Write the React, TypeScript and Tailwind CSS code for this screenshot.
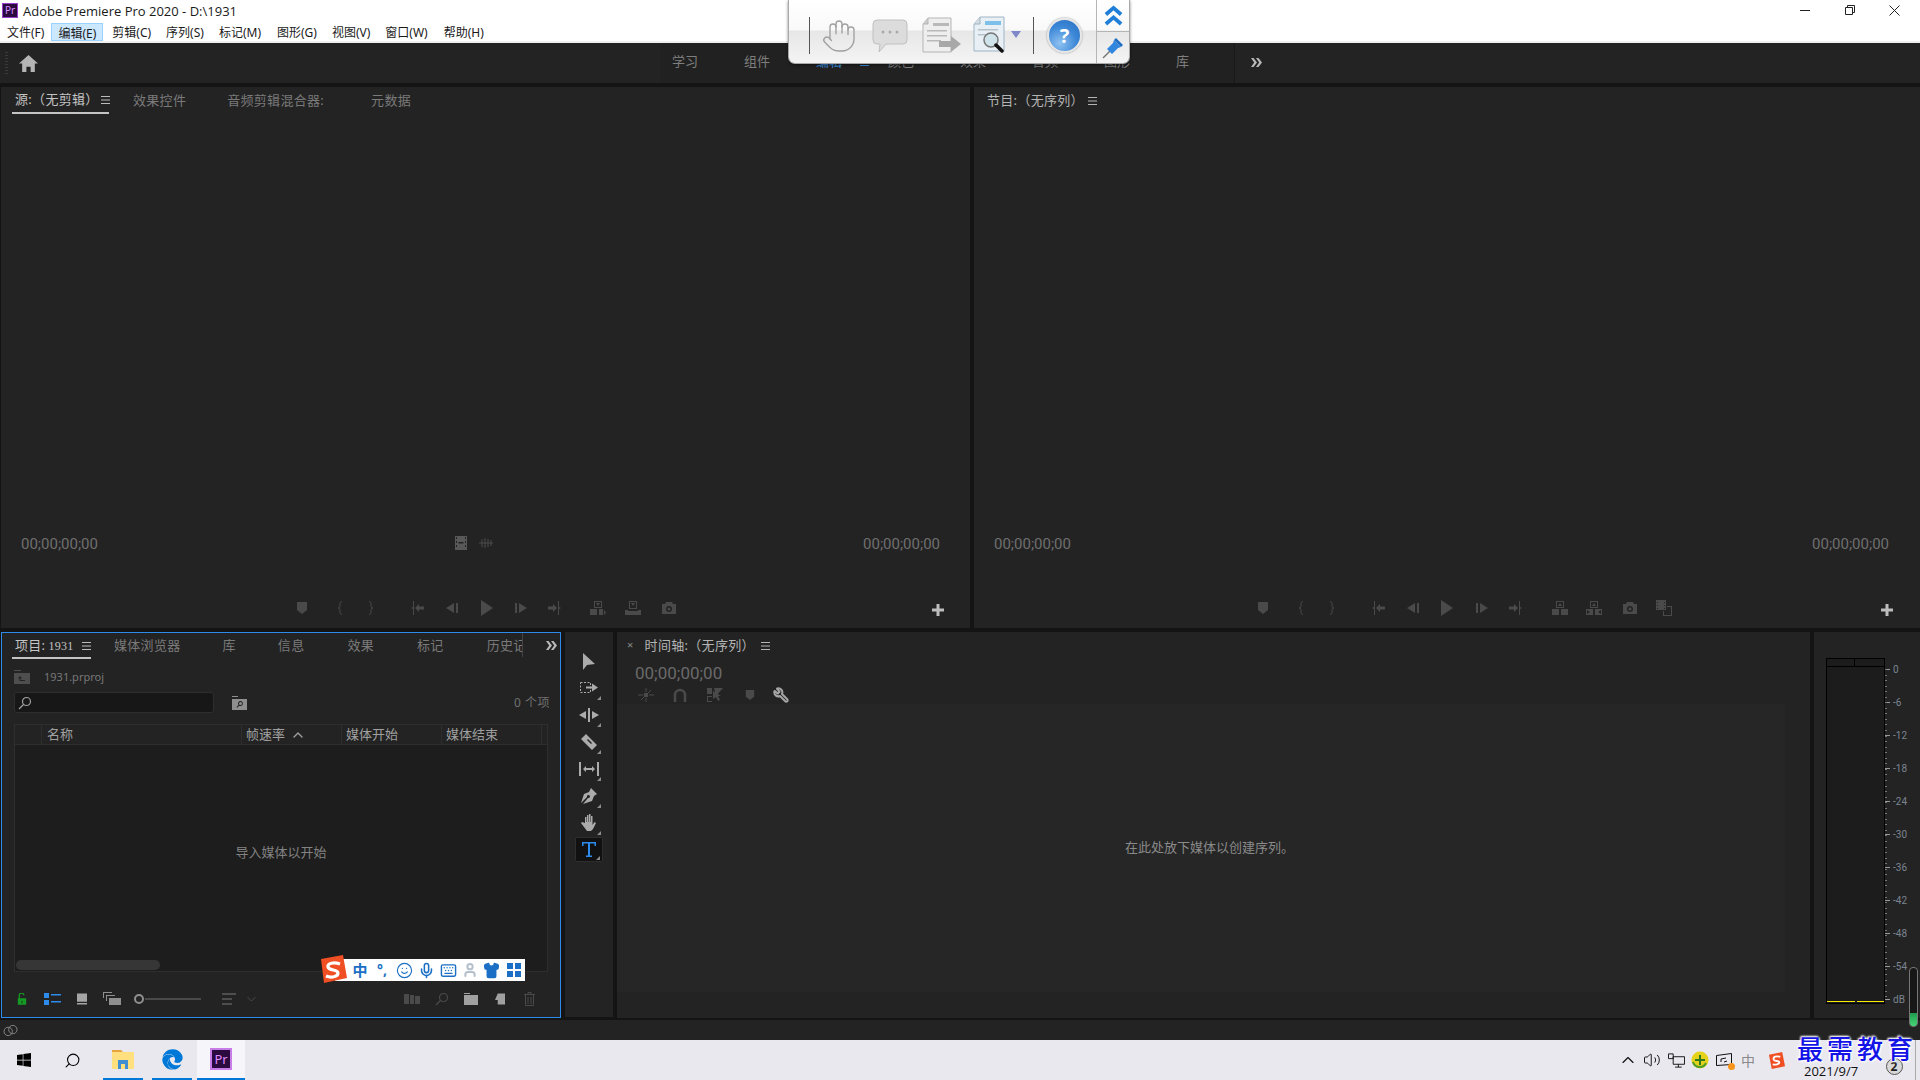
import React from "react";
import { Hand, Mic, Keyboard, User, Shirt, Smile, ChevronUp, Volume2, Search, Wrench } from "lucide-react";
import { FaWindows, FaEdge } from "react-icons/fa";

type P = { className?: string };
const Box = ({ className, children, vb = "0 0 16 16" }: P & { children: React.ReactNode; vb?: string }) => (
  <svg viewBox={vb} fill="currentColor" className={className}>{children}</svg>
);
const base = "w-4 h-4 shrink-0";
const Marker = () => <Box className={base}><path d="M3 2h10v8l-5 4-5-4z" /></Box>;
const BraceL = () => <Box className={base}><path d="M10 1.5C8 1.5 8 3 8 5s0 2.5-2 3c2 .5 2 1 2 3s0 3.5 2 3.5" fill="none" stroke="currentColor" /></Box>;
const BraceR = () => <Box className={base}><path d="M6 1.5C8 1.5 8 3 8 5s0 2.5 2 3c-2 .5-2 1-2 3s0 3.5-2 3.5" fill="none" stroke="currentColor" /></Box>;
const GoIn = () => <Box className={base}><path d="M4 1v6L2 8l2 1v6h1V1zM6 8l4-4v2.5h5v3h-5V12z" /></Box>;
const StepBack = () => <Box className={base}><path d="M11 3v10L3 8zM13 3h2v10h-2z" /></Box>;
const Play = () => <Box className={base}><path d="M2 0v16l12-8z" /></Box>;
const StepFwd = () => <Box className={base}><path d="M1 3h2v10H1zM5 3v10l8-5z" /></Box>;
const GoOut = () => <Box className={base}><path d="M1 6.5h5V4l4 4-4 4V9.5H1zM11 1h1v6l2 1-2 1v6h-1z" /></Box>;
const Insert = () => <Box className={base}><path fillRule="evenodd" d="M4 1h8v7H4zM5 2v5h6V2zM6 3h4L8 6zM0 9h7v6H0zM9 9h4v6H9zM14 10l2 2.5-2 2.5z" /></Box>;
const Overwrite = () => <Box className={base}><path fillRule="evenodd" d="M4 1h8v8H4zM5 2v6h6V2zM6 3h4L8 6zM0 10h3v1h10v-1h3v5H0z" /></Box>;
const Lift = () => <Box className={base}><path fillRule="evenodd" d="M4 1h8v7H4zM5 2v5h6V2zM8 3l2 3H6zM0 9h7v6H0zM9 9h7v6H9z" /></Box>;
const Extract = () => <Box className={base}><path fillRule="evenodd" d="M4 1h8v7H4zM5 2v5h6V2zM8 3l2 3H6zM0 9h7v6H0zM1 10v4l3-2zM9 9h7v6H9zM15 10v4l-3-2z" /></Box>;
const Camera = () => <Box className={base}><path fillRule="evenodd" d="M5 2h6l1 2h3v10H1V4h3zM8 6a3 3 0 1 0 0 6 3 3 0 0 0 0-6zm0 1.5a1.5 1.5 0 1 1 0 3 1.5 1.5 0 0 1 0-3z" /></Box>;
const Compare = () => <Box className={base}><path fillRule="evenodd" d="M0 0h10v10H0zM1 2v1h1V2zM1 5v1h1V5zM1 8v1h1V8zM8 2v1h1V2zM8 5v1h1V5zM8 8v1h1V8zM11 6h5v10H7v-5h1v4h7V7h-4z" /></Box>;
const Plus = () => <Box className="w-4 h-4 shrink-0 text-[#bdbdbd]"><path d="M6.5 2h3v4.5H14v3H9.5V14h-3V9.5H2v-3h4.5z" /></Box>;
const DoubleChevron = ({ className = "" }: P) => (
  <svg viewBox="0 0 11 9" fill="currentColor" className={`w-[11px] h-[9px] shrink-0 text-[#b8b8b8] ${className}`}>
    <path d="M0 0h2.5L6 4.5 2.5 9H0l3.2-4.5zM5 0h2.5L11 4.5 7.5 9H5l3.2-4.5z" />
  </svg>
);

const MenuGlyph = ({ className = "text-[#a8a8a8]" }: P) => (
  <svg viewBox="0 0 9 8" fill="currentColor" className={`w-[9px] h-2 shrink-0 ${className}`}>
    <path d="M0 0h9v1H0zM0 3.5h9v1H0zM0 7h9v1H0z" />
  </svg>
);
const Corner = () => <span className="absolute right-[2px] bottom-[1px] w-0 h-0 border-l-[4px] border-l-transparent border-b-[4px] border-b-[#8d8d8d]" />;

const Tool = ({ children, fly = true }: { children: React.ReactNode; fly?: boolean }) => (
  <div className="relative w-7 h-[27px] flex items-center justify-center text-[#ababab]">
    {children}
    {fly && <Corner />}
  </div>
);

const menus = [
  ["文件(F)", "ml-[7px]"], ["编辑(E)", "ml-[7px] bg-[#cce8ff] border border-[#99d1ff] px-[6px]"], ["剪辑(C)", "ml-[9px]"], ["序列(S)", "ml-[15px]"],
  ["标记(M)", "ml-[15px]"], ["图形(G)", "ml-[16px]"], ["视图(V)", "ml-[15px]"], ["窗口(W)", "ml-[15px]"], ["帮助(H)", "ml-[16px]"],
] as const;

const Timecode = ({ className = "" }: P) => <span className={`text-[15px] text-[#6f6f6f] [font-family:'Roboto',sans-serif] ${className}`}>00;00;00;00</span>;

const ScaleRow = ({ t }: { t: string }) => (
  <div className="flex items-center h-3">
    <span className="w-[5px] h-px bg-[#9a9a9a]" />
    <span className="ml-[3px] text-[10px] text-[#7c8591] [font-family:'Roboto',sans-serif]">{t}</span>
  </div>
);

export default function App() {
  return (
    <div className="relative w-[1920px] h-[1080px] overflow-hidden flex flex-col bg-[#141414] [text-spacing-trim:space-all] [font-family:'Noto_Sans','Noto_Sans_CJK_SC',sans-serif]">
      {/* Title + menu */}
      <div className="h-[43px] shrink-0 bg-white border-b-2 border-[#f0f0f0] flex flex-col">
        <div className="h-[22px] flex items-center">
          <div className="ml-[2px] -mt-[2px] w-4 h-[15px] bg-[#2a0a3f] border border-[#9a3fd0] flex items-center justify-center text-[10px] leading-none text-[#d78bff]">Pr</div>
          <span className="ml-[5px] mt-[1px] text-[13px] text-[#1a1a1a] [font-family:'Open_Sans',sans-serif]">Adobe Premiere Pro 2020 - D:\1931</span>
          <div className="ml-auto -mt-[2px] flex items-center text-[#222]">
            <span className="w-[45px] h-[21px] flex items-center justify-center"><span className="w-[10px] h-px bg-[#222]" /></span>
            <span className="w-[45px] h-[21px] flex items-center justify-center">
              <svg viewBox="0 0 10 10" className="w-[10px] h-[10px]" fill="none" stroke="currentColor"><path d="M.5 2.5h7v7h-7zM2.5 2.5v-2h7v7h-2" /></svg>
            </span>
            <span className="w-[45px] h-[21px] mr-[3px] flex items-center justify-center">
              <svg viewBox="0 0 11 11" className="w-[11px] h-[11px]" fill="none" stroke="currentColor"><path d="M.5.5l10 10M10.5.5l-10 10" /></svg>
            </span>
          </div>
        </div>
        <div className="h-[19px] flex items-center text-[12px] text-[#1a1a1a]">
          {menus.map(([t, c]) => <span key={t} className={`h-[18px] leading-[19px] ${c}`}>{t}</span>)}
        </div>
      </div>

      {/* Workspace header */}
      <div className="h-10 shrink-0 bg-[#232323] flex items-center">
        <div className="w-[660px] h-full flex items-center">
          <span className="ml-[5px] w-[3px] h-[22px] bg-[repeating-linear-gradient(to_bottom,#3a3a3a_0,#3a3a3a_1px,transparent_1px,transparent_3px)]" />
          <svg viewBox="0 0 18 18" fill="currentColor" className="ml-[11px] w-[19px] h-[19px] text-[#b5b5b5]"><path d="M9 1l9 8h-3v8h-4v-5H7v5H3V9H0z" /></svg>
        </div>
        <div className="w-[575px] h-full pl-3 pb-[2px] bg-[#212121] border-r border-[#191919] flex items-center text-[13px] text-[#7f7f7f]">
          <span className="w-[72px]">学习</span>
          <span className="w-[72px]">组件</span>
          <span className="w-[72px] flex items-center gap-[18px] text-[#3c8fe0]">编辑<MenuGlyph className="text-[#3c8fe0]" /></span>
          <span className="w-[72px]">颜色</span>
          <span className="w-[72px]">效果</span>
          <span className="w-[72px]">音频</span>
          <span className="w-[72px]">图形</span>
          <span>库</span>
        </div>
        <DoubleChevron className="ml-4 -mt-[2px]" />
      </div>
      <div className="h-1 shrink-0" />

      {/* Monitors */}
      <div className="h-[541px] shrink-0 flex gap-1">
        <div className="ml-px w-[969px] bg-[#232323] flex flex-col">
          <div className="h-[27px] flex items-start text-[13px] tracking-[0.3px] text-[#7a7a7a]">
            <div className="ml-[11px] w-[97px] h-[27px] pl-[3px] border-b-2 border-[#c4c4c4] flex items-center whitespace-nowrap text-[#c4c4c4]">源:（无剪辑）<MenuGlyph className="ml-[2px] text-[#bbb]" /></div>
            <span className="ml-6 h-[26px] leading-[26px]">效果控件</span>
            <span className="ml-[41px] h-[26px] leading-[26px]">音频剪辑混合器:</span>
            <span className="ml-[47px] h-[26px] leading-[26px]">元数据</span>
          </div>
          <div className="flex-1" />
          <div className="h-5 flex items-center pl-5 text-[#4c4c4c]">
            <Timecode />
            <svg viewBox="0 0 12 16" fill="currentColor" className="ml-[357px] -mt-[2px] w-3 h-4 text-[#585858]"><path fillRule="evenodd" d="M0 1h12v14H0zM1 2v2h1V2zM1 6v2h1V6zM1 10v2h1v-2zM10 2v2h1V2zM10 6v2h1V6zM10 10v2h1v-2zM3.5 7v1.5h5V7z" /></svg>
            <svg viewBox="0 0 14 10" fill="none" stroke="currentColor" className="ml-[12px] -mt-[2px] w-[14px] h-[10px]"><path d="M0 5h14M3 1v8M6 0v10M9 1v8M12 2v6" /></svg>
            <Timecode className="ml-auto mr-[30px]" />
          </div>
          <div className="mt-[42px] mb-2 h-6 pl-[293px] flex items-center text-[#4a4a4a]">
            <Marker /><span className="ml-[22px]"><BraceL /></span><span className="ml-[15px]"><BraceR /></span>
            <span className="ml-[30px]"><GoIn /></span><span className="ml-[18px]"><StepBack /></span><span className="ml-5"><Play /></span>
            <span className="ml-[19px]"><StepFwd /></span><span className="ml-[17px]"><GoOut /></span><span className="ml-[27px]"><Insert /></span>
            <span className="ml-[19px]"><Overwrite /></span><span className="ml-5"><Camera /></span><span className="ml-[253px] mt-1"><Plus /></span>
          </div>
        </div>
        <div className="flex-1 bg-[#232323] flex flex-col">
          <div className="h-[27px] pl-[13px] flex items-center text-[13px] tracking-[0.3px] text-[#b4b4b4]">节目:（无序列）<MenuGlyph className="ml-[4px]" /></div>
          <div className="flex-1" />
          <div className="h-5 flex items-center pl-5 text-[#4c4c4c]">
            <Timecode />
            <Timecode className="ml-auto mr-[31px]" />
          </div>
          <div className="mt-[42px] mb-2 h-6 pl-[281px] flex items-center text-[#4a4a4a]">
            <Marker /><span className="ml-[22px]"><BraceL /></span><span className="ml-[15px]"><BraceR /></span>
            <span className="ml-[30px]"><GoIn /></span><span className="ml-[18px]"><StepBack /></span><span className="ml-[19px]"><Play /></span>
            <span className="ml-5"><StepFwd /></span><span className="ml-[17px]"><GoOut /></span><span className="ml-7"><Lift /></span>
            <span className="ml-[18px]"><Extract /></span><span className="ml-5"><Camera /></span><span className="ml-[18px]"><Compare /></span>
            <span className="ml-[207px] mt-1"><Plus /></span>
          </div>
        </div>
      </div>
      <div className="h-1 shrink-0" />

      {/* Lower row */}
      <div className="h-[386px] shrink-0 flex">
        {/* Project */}
        <div className="ml-px w-[560px] border border-[#2d8ceb] bg-[#232323] flex flex-col">
          <div className="h-[26px] shrink-0 flex items-start text-[13px] tracking-[0.3px] text-[#7a7a7a]">
            <div className="ml-[10px] w-[79px] shrink-0 h-[26px] pl-[3px] pt-[1px] border-b-2 border-[#c4c4c4] flex items-center whitespace-nowrap text-[#c4c4c4]">
              <span>项目:</span><span className="ml-[3px] text-[12px] [font-family:'Liberation_Serif',serif]">1931</span><MenuGlyph className="ml-[8px] text-[#bbb]" />
            </div>
            <span className="ml-[23px] h-6 leading-[25px]">媒体浏览器</span>
            <span className="ml-[42px] h-6 leading-[25px]">库</span>
            <span className="ml-[42px] h-6 leading-[25px]">信息</span>
            <span className="ml-[43px] h-6 leading-[25px]">效果</span>
            <span className="ml-[43px] h-6 leading-[25px]">标记</span>
            <span className="ml-[43px] h-6 leading-[25px] w-9 overflow-hidden whitespace-nowrap border-r border-[#444]">历史记</span>
            <DoubleChevron className="ml-[23px] mt-[8px]" />
          </div>
          <div className="h-[33px] shrink-0 pt-[3px] flex items-center pl-3 text-[11px] text-[#777]">
            <svg viewBox="0 0 16 14" fill="currentColor" className="w-4 h-[14px] text-[#4e4e4e]"><path fillRule="evenodd" d="M0 0h7v1H0zM0 3h16v11H0zM6 6 4 8.5h1.5V11H11v-1H6.5V8.5H8z" /></svg>
            <span className="ml-[14px]">1931.prproj</span>
          </div>
          <div className="h-[21px] shrink-0 flex items-center pl-3">
            <div className="w-[200px] h-[21px] bg-[#171717] border border-[#2e2e2e] rounded-[3px] flex items-center pl-[3px]">
              <svg viewBox="0 0 14 14" fill="none" stroke="currentColor" strokeWidth="1.2" className="w-[14px] h-[14px] text-[#a0a0a0]"><circle cx="8.5" cy="5.5" r="4" /><path d="M5.5 8.5 1 13" /></svg>
            </div>
            <svg viewBox="0 0 15 14" fill="currentColor" className="ml-[18px] w-[15px] h-[14px] text-[#8f8f8f]"><path fillRule="evenodd" d="M0 0h6v1H0zM0 3h15v11H0zM8.5 5a2.5 2.5 0 0 0-2 4l-2 2 .7.7 2-2A2.5 2.5 0 1 0 8.5 5zm0 1a1.5 1.5 0 1 1 0 3 1.5 1.5 0 0 1 0-3z" /></svg>
            <span className="ml-auto mr-[10px] text-[12px] tracking-[0.5px] text-[#707070]">0 个项</span>
          </div>
          <div className="ml-3 mt-[11px] w-[534px] flex-1 flex flex-col border border-[#2e2e2e] bg-[#1d1d1d]">
            <div className="h-5 shrink-0 bg-[#232323] border-b border-[#2e2e2e] flex items-center text-[13px] text-[#a0a0a0]">
              <span className="w-[27px] h-full border-r border-[#2e2e2e]" />
              <span className="w-[200px] h-full pl-[5px] border-r border-[#2e2e2e] flex items-center">名称</span>
              <span className="w-[100px] h-full pl-[4px] border-r border-[#2e2e2e] flex items-center">帧速率<ChevronUp className="ml-[5px] w-4 h-4 text-[#a0a0a0]" strokeWidth={2} /></span>
              <span className="w-[100px] h-full pl-[4px] border-r border-[#2e2e2e] flex items-center">媒体开始</span>
              <span className="w-[100px] h-full pl-[4px] border-r border-[#2e2e2e] flex items-center">媒体结束</span>
            </div>
            <div className="flex-1 flex items-center justify-center text-[13px] text-[#828282]">导入媒体以开始</div>
            <div className="h-[11px] shrink-0 pl-px">
              <div className="w-[144px] h-[10px] rounded-[5px] bg-[#363636]" />
            </div>
          </div>
          <div className="h-[45px] shrink-0 pt-[8px] flex items-center">
            <svg viewBox="0 0 12 14" fill="currentColor" className="ml-[15px] w-[10px] h-3 text-[#159b24]"><path fillRule="evenodd" d="M2 6V3a3.5 3.5 0 0 1 7-.5H7.5A2 2 0 0 0 3.5 3v3H11v8H1V6zm3.5 3v3h1V9z" /></svg>
            <svg viewBox="0 0 17 12" fill="currentColor" className="ml-[17px] w-[17px] h-3 text-[#2d8ceb]"><path d="M0 0h5v5H0zM0 7h5v5H0zM7 1h10v1.5H7zM7 8h10v1.5H7z" /></svg>
            <svg viewBox="0 0 11 12" fill="currentColor" className="ml-[16px] w-[10px] h-3 text-[#a5a5a5]"><path d="M0 0h11v9H0zM0 10.5h11V12H0z" /></svg>
            <svg viewBox="0 0 18 13" fill="currentColor" className="ml-[16px] w-[18px] h-[13px] text-[#8f8f8f]"><path fillRule="evenodd" d="M0 0h9v1H1v5H0zM3 3h9v1H4v5H3zM6 6h12v7H6z" /></svg>
            <span className="ml-[13px] w-[10px] h-[10px] rounded-full border-2 border-[#8f8f8f]" />
            <span className="ml-[1px] w-[56px] h-[2px] bg-[#4a4a4a]" />
            <svg viewBox="0 0 14 12" fill="currentColor" className="ml-[21px] w-[14px] h-3 text-[#4e4e4e]"><path d="M0 0h14v2H0zM0 5h10v2H0zM0 10h10v2H0z" /></svg>
            <svg viewBox="0 0 9 6" fill="none" stroke="currentColor" className="ml-[11px] w-[9px] h-[6px] text-[#4a4a4a]"><path d="M.5 1l4 4 4-4" /></svg>
            <div className="ml-auto mr-[25px] flex items-center gap-[15px] text-[#4a4a4a]">
              <svg viewBox="0 0 16 10" fill="currentColor" className="w-4 h-[10px]"><path d="M0 0h5v10H0zM6 1h4v9H6zM11 2h5v8h-5z" /></svg>
              <svg viewBox="0 0 14 14" fill="none" stroke="currentColor" strokeWidth="1.2" className="w-[14px] h-[14px]"><circle cx="8.5" cy="5.5" r="4" /><path d="M5.5 8.5 1 13" /></svg>
              <svg viewBox="0 0 14 12" fill="currentColor" className="w-[14px] h-3 text-[#a0a0a0]"><path d="M0 0h6v1H0zM0 2h14v10H0z" /></svg>
              <svg viewBox="0 0 11 12" fill="currentColor" className="ml-[2px] w-[10px] h-3 text-[#a0a0a0]"><path d="M3 0h8v12H3V7H0z" /></svg>
              <svg viewBox="0 0 11 14" fill="none" stroke="currentColor" className="ml-[4px] w-[11px] h-[14px]"><path d="M0 2.5h11M4 2V.5h3V2M1.5 3v10.5h8V3M4 5v7M7 5v7" /></svg>
            </div>
          </div>
        </div>

        {/* Tools */}
        <div className="ml-1 w-12 h-[385px] bg-[#232323] flex flex-col items-center pt-[17px]">
          <div className="w-7 h-6 flex items-center justify-center text-[#ababab]"><svg viewBox="0 0 12 17" fill="currentColor" className="w-3 h-[17px]"><path d="M0 0v17l4-5 8-1z" /></svg></div>
          <div className="h-px shrink-0" />
          <Tool>
            <svg viewBox="0 0 18 12" className="w-[18px] h-3">
              <rect x=".5" y=".5" width="10" height="10" fill="none" stroke="currentColor" strokeDasharray="2 1.5" />
              <path d="M6 4.5h6V1.5l6 4-6 4v-3H6z" fill="currentColor" />
            </svg>
          </Tool>
          <Tool><svg viewBox="0 0 20 14" fill="currentColor" className="w-5 h-[14px]"><path d="M9 0h2v14H9zM0 7l7-4v8zM20 7l-7-4v8z" /></svg></Tool>
          <Tool><svg viewBox="0 0 16 16" fill="currentColor" className="w-4 h-4"><path fillRule="evenodd" d="M5 0l11 11-5 5L0 5zM6 6l4 4 1-1-4-4z" /></svg></Tool>
          <Tool><svg viewBox="0 0 20 14" fill="currentColor" className="w-5 h-[14px]"><path d="M0 0h2v14H0zM18 0h2v14h-2zM4 7l3-3v2h6V4l3 3-3 3V8H7v2z" /></svg></Tool>
          <Tool><svg viewBox="0 0 16 16" fill="currentColor" className="w-4 h-4"><path fillRule="evenodd" d="M10 0l6 6-3 2-2 5-9 3 5-6a1.5 1.5 0 1 0-1-1l-6 6 3-9 5-2z" /></svg></Tool>
          <Tool><svg viewBox="0 0 16 17" fill="currentColor" className="w-4 h-[17px]"><path d="M4 9V3h1.5v5H6V1h1.5v7H8V0h1.5v8h.5V2h1.5v9l2-3 1.5 1-3 6-2 2H6l-3-4-3-4 1-1z" /></svg></Tool>
          <div className="relative mt-[1px] w-7 h-[25px] bg-[#111] border border-[#2e2e2e] rounded-[2px] flex items-center justify-center">
            <svg viewBox="0 0 14 15" fill="currentColor" className="w-[14px] h-[15px] text-[#2d8ceb]"><path d="M0 0h14v4h-1.5V1.5H8v12h2V15H4v-1.5h2v-12H1.5V4H0z" /></svg>
            <Corner />
          </div>
        </div>

        {/* Timeline */}
        <div className="ml-1 w-[1193px] bg-[#232323] flex flex-col">
          <div className="h-[26px] shrink-0 pt-[1px] flex items-center text-[13px] tracking-[0.3px] text-[#b4b4b4]">
            <span className="ml-[10px] text-[11px] text-[#8a8a8a]">×</span>
            <span className="ml-[11px] whitespace-nowrap">时间轴:（无序列）</span><MenuGlyph className="ml-[6px]" />
          </div>
          <div className="h-[28px] shrink-0 pl-[18px] pt-[4px] flex items-center text-[17px] text-[#6a6a6a] [font-family:'Roboto',sans-serif]">00;00;00;00</div>
          <div className="h-[19px] -mt-px shrink-0 pl-[21px] flex items-center text-[#4a4a4a]">
            <svg viewBox="0 0 16 14" fill="none" stroke="currentColor" className="w-4 h-[14px]"><path d="M0 7h5M11 7h5M8 0v4M8 10v4M3 12 13 2" /><path d="M6 5h4v4H6z" fill="currentColor" stroke="none" /></svg>
            <svg viewBox="0 0 14 14" fill="none" stroke="currentColor" strokeWidth="2.5" className="ml-[19px] w-[14px] h-[14px]"><path d="M2 14V7a5 5 0 0 1 10 0v7" /></svg>
            <svg viewBox="0 0 16 14" fill="currentColor" className="ml-5 w-4 h-[14px]"><path d="M0 0h5v6H0zM0 8h5v1H1v4h4v1H0zM7 0h9L9 8zM6 3l8 5h-3l2 4-2 1-2-4-3 2z" /></svg>
            <svg viewBox="0 0 12 14" fill="currentColor" className="ml-[22px] w-[10px] h-3"><path d="M1 1h10v8l-5 4-5-4z" /></svg>
            <Wrench className="ml-[18px] w-4 h-4 -scale-x-100 text-[#a5a5a5]" strokeWidth={3} />
          </div>
          <div className="mb-[26px] mr-[25px] flex-1 pl-[17px] bg-[#262626] flex items-center justify-center text-[13px] text-[#8a8a8a]">在此处放下媒体以创建序列。</div>
        </div>

        {/* Audio meter */}
        <div className="ml-1 flex-1 bg-[#232323] pt-[26px] pl-3 flex">
          <div className="w-[59px] h-[346px] border border-black bg-[#1c1c1c] flex flex-col">
            <div className="h-2 shrink-0 border-b border-black flex">
              <span className="w-[28px] h-full border-r border-black" />
            </div>
            <div className="flex-1 flex flex-col justify-end pb-px">
              <div className="h-px flex"><span className="w-[28px] bg-[#f5ea00]" /><span className="ml-[2px] flex-1 bg-[#f5ea00]" /></div>
            </div>
          </div>
          <div className="relative mt-[5px] h-[343px] flex flex-col justify-between">
            <span className="absolute left-0 top-[6px] bottom-[6px] w-[2px] bg-[repeating-linear-gradient(to_bottom,#777_0,#777_1px,transparent_1px,transparent_5.55px)]" />
            {["0", "-6", "-12", "-18", "-24", "-30", "-36", "-42", "-48", "-54", "dB"].map((t) => <ScaleRow key={t} t={t} />)}
          </div>
        </div>
      </div>

      {/* Status */}
      <div className="h-[2px] shrink-0" />
      <div className="h-5 shrink-0 bg-[#232323] flex items-center pl-[3px]">
        <svg viewBox="0 0 16 14" fill="none" stroke="currentColor" className="w-[15px] h-[13px] text-[#8a8a8a]"><circle cx="5.5" cy="8" r="4.5" /><circle cx="10.5" cy="6" r="4.5" /></svg>
      </div>

      {/* Taskbar */}
      <div className="h-10 shrink-0 bg-[#e9e8ef] flex text-black">
        <div className="w-12 h-full flex items-center justify-center"><FaWindows className="w-4 h-4" /></div>
        <div className="w-12 h-full flex items-center justify-center"><Search className="w-[17px] h-[17px] -scale-x-100" strokeWidth={1.5} /></div>
        <div className="ml-[7px] w-10 h-full border-b-2 border-[#0078d7] flex items-center justify-center">
          <svg viewBox="0 0 22 20" className="w-[22px] h-5"><path d="M0 1h9l2 2h-11z" fill="#e8a33c" /><path d="M0 3h22v17H0z" fill="#ffdf7e" /><path d="M6 11h10v9H6z" fill="#3f8fd2" /><path d="M9 15h4v5H9z" fill="#ffdf7e" /></svg>
        </div>
        <div className="ml-[9px] w-10 h-full border-b-2 border-[#0078d7] flex items-center justify-center"><FaEdge className="w-[21px] h-[23px] text-[#0078d7]" /></div>
        <div className="ml-[5px] w-12 h-full bg-[#f6f5f9] border-b-2 border-[#0078d7] flex items-center justify-center">
          <div className="w-[22px] h-[22px] bg-[#2a0a3f] border-2 border-[#c77ce8] flex items-center justify-center text-[13px] leading-none text-[#e08bff]">Pr</div>
        </div>
        <div className="ml-auto flex items-center text-[#111]">
          <span className="w-6 flex justify-center"><ChevronUp className="w-5 h-5" strokeWidth={1.4} /></span>
          <span className="w-6 flex justify-center"><Volume2 className="w-[18px] h-[18px]" strokeWidth={1.3} /></span>
          <span className="w-6 flex justify-center">
            <svg viewBox="0 0 18 15" fill="none" stroke="currentColor" className="w-[17px] h-[15px]"><path d="M5.5 3.5h12v8h-12zM11 11.5v3M7.5 14.5h7M.5.5h5v5h-5z" /></svg>
          </span>
          <span className="w-6 flex justify-center">
            <svg viewBox="0 0 18 18" className="w-[18px] h-[18px]"><circle cx="9" cy="9" r="8.5" fill="#e5d21c" /><path d="M2 11a7 7 0 0 0 13 1" fill="none" stroke="#4e9e2a" strokeWidth="2" /><path d="M8 4h2v4h4v2h-4v4H8v-4H4V8h4z" fill="#2c7a1d" /></svg>
          </span>
          <span className="relative w-6 flex justify-center">
            <svg viewBox="0 0 16 14" fill="none" stroke="currentColor" className="w-4 h-[14px]"><path d="M.5 2.5l15-2v11l-15 1zM5 9V6l5-1M8 9l3-1" /></svg>
            <span className="absolute right-[1px] -bottom-[3px] w-[7px] h-[7px] rounded-full bg-[#f7941d]" />
          </span>
          <span className="w-6 flex justify-center text-[14px] text-[#8a8a8a]">中</span>
          <span className="ml-1 w-6 flex justify-center">
            <svg viewBox="0 0 18 18" className="w-[17px] h-[17px]"><path d="M1 3 15 0l3 15-14 3z" fill="#f04e23" /><path d="M13 5C9 4 5 5 6 8c1 2 6 1 6 3s-4 3-7 2" fill="none" stroke="#fff" strokeWidth="2" /></svg>
          </span>
          <span className="ml-4 w-[51px] pt-[22px] text-[13px] leading-[14px] text-[#111] whitespace-nowrap [font-family:'Open_Sans',sans-serif]">2021/9/7</span>
          <span className="ml-[27px] w-6 flex justify-center pt-[13px]">
            <span className="w-[17px] h-[17px] rounded-full border border-[#555] bg-[#d8d8d8] flex items-center justify-center text-[12px] font-bold leading-none text-[#222]">2</span>
          </span>
          <span className="ml-[9px] w-[5px] h-full border-l border-[#aaa]" />
        </div>
      </div>

      {/* Floating PDF toolbar */}
      <div className="absolute left-[788px] top-0 w-[342px] h-[64px] flex rounded-b-[7px] border border-t-0 border-[#a9a9a9] shadow-[0_1px_3px_rgba(0,0,0,0.5)] bg-[linear-gradient(to_bottom,#ffffff_0%,#f9f9f9_47%,#e7e7e7_50%,#f4f4f4_100%)]">
        <span className="ml-[20px] mt-[17px] w-px h-[37px] bg-[#555]" />
        <Hand className="ml-[11px] mt-[17px] w-[36px] h-[38px] text-[#a0a0a0]" strokeWidth={0.9} />
        <svg viewBox="0 0 36 34" className="ml-[15px] mt-[19px] w-[36px] h-[34px]"><path d="M5 1h26a4 4 0 0 1 4 4v16a4 4 0 0 1-4 4H14l-7 8 1-8H5a4 4 0 0 1-4-4V5a4 4 0 0 1 4-4z" fill="#dcdcdc" stroke="#c0c0c0" /><circle cx="11" cy="13" r="1.5" fill="#aaa" /><circle cx="18" cy="13" r="1.5" fill="#aaa" /><circle cx="25" cy="13" r="1.5" fill="#aaa" /></svg>
        <svg viewBox="0 0 40 36" className="ml-[14px] mt-[17px] w-[40px] h-[36px]"><path d="M6 1h23v34H1V7z" fill="#eee" stroke="#b5b5b5" /><path d="M6 1v6H1" fill="#ccc" stroke="#b5b5b5" /><path d="M11 6h16v3H11zM5 13h20v1.5H5zM5 18h20v1.5H5zM5 23h14v1.5H5z" fill="#b8b8b8" /><path d="M17 24h12v-5l10 8-10 8v-5H17z" fill="#a8a8a8" /></svg>
        <svg viewBox="0 0 38 38" className="ml-[10px] mt-[15px] w-[38px] h-[38px]"><path d="M8 2h24v34H2V9z" fill="#e8f0f5" stroke="#9fb4c4" /><path d="M8 2v7H2" fill="#d4dde4" stroke="#9fb4c4" /><path d="M13 6h16v4H13z" fill="#7dc0ea" /><path d="M6 14h20v1.5H6zM6 19h8v1.5H6z" fill="#b5c2cc" /><circle cx="19" cy="25" r="7" fill="#cfe3ea" stroke="#777" strokeWidth="1.5" /><path d="M24 30l6 6" stroke="#111" strokeWidth="3.5" strokeLinecap="round" /></svg>
        <span className="ml-[1px] mt-[31px] w-0 h-0 border-x-[5px] border-x-transparent border-t-[7px] border-t-[#7f88c9]" />
        <span className="ml-[12px] mt-[17px] w-px h-[37px] bg-[#555]" />
        <div className="ml-[13px] mt-[18px] w-[35px] h-[35px] rounded-full border-[2px] border-[#e6e6e6] shadow-[0_0_2px_#888] bg-[radial-gradient(circle_at_35%_75%,#8ec2f2_0%,#3b86d6_55%,#2a6fc0_100%)] flex items-center justify-center text-[20px] font-bold leading-none text-white">?</div>
        <div className="ml-[14px] w-[33px] h-full border-l border-[#b5b5b5] flex flex-col">
          <div className="h-[32px] border-b border-[#b5b5b5] flex items-center justify-center">
            <svg viewBox="0 0 20 22" fill="none" stroke="#1f7fd8" strokeWidth="4" className="w-[19px] h-[21px]"><path d="M2 10l8-7 8 7M2 20l8-7 8 7" /></svg>
          </div>
          <div className="flex-1 flex items-center justify-center">
            <svg viewBox="0 0 22 22" className="w-[22px] h-[22px]"><path d="M1 21l7-7" stroke="#777" strokeWidth="1.5" /><path d="M12 3l7 7-3 1-5 5-1 1-5-5 1-1 5-5z" fill="#2f86dc" /><path d="M14 1l7 7-2 2-7-7z" fill="#1e6fc4" /></svg>
          </div>
        </div>
      </div>

      {/* Input method bar */}
      <div className="absolute left-[335px] top-[959px] w-[190px] h-[22px] bg-white flex items-center pl-[14px] text-[#1b6fc4]">
        <span className="w-[22px] text-center text-[15px] font-bold leading-none">中</span>
        <span className="w-[22px] text-center text-[14px] font-bold leading-none">°,</span>
        <Smile className="ml-[3px] w-[17px] h-[17px]" strokeWidth={1.6} />
        <Mic className="ml-[5px] w-[17px] h-[17px]" strokeWidth={2.2} />
        <Keyboard className="ml-[5px] w-[17px] h-[17px]" strokeWidth={2} />
        <User className="ml-[5px] w-[16px] h-[16px] text-[#b4bfcc]" strokeWidth={3} />
        <Shirt className="ml-[5px] w-[17px] h-[17px]" fill="currentColor" />
        <svg viewBox="0 0 14 14" fill="currentColor" className="ml-[7px] w-[14px] h-[14px]"><path d="M0 0h6v6H0zM8 0h6v6H8zM0 8h6v6H0zM8 8h6v6H8z" /></svg>
      </div>
      <svg viewBox="0 0 28 28" className="absolute left-[319px] top-[955px] w-[28px] h-[28px]">
        <path d="M2 4 24 0l4 23-23 5z" fill="#f04e23" />
        <path d="M21 9c-6-2-13-1-12 3s10 2 10 6-7 5-12 3" fill="none" stroke="#fff" strokeWidth="3.2" />
      </svg>

      {/* Master level slider */}
      <div className="absolute left-[1909px] top-[967px] w-[9px] h-[60px] rounded-[4px] border border-[#777] bg-[#171717] flex flex-col justify-end">
        <div className="h-[13px] rounded-b-[3px] bg-[linear-gradient(to_bottom,#1f9a4d,#47d676)]" />
      </div>

      {/* Watermark */}
      <div className="absolute left-[1797px] top-[1034px] w-[122px] h-[28px] text-[26px] font-medium leading-[28px] tracking-[4px] whitespace-nowrap text-[#1414e6] [font-family:'Noto_Sans_CJK_SC',sans-serif] [text-shadow:0_0_2px_#fff,0_0_3px_#fff,1px_1px_2px_#fff,-1px_-1px_2px_#fff]">最需教育</div>
    </div>
  );
}
